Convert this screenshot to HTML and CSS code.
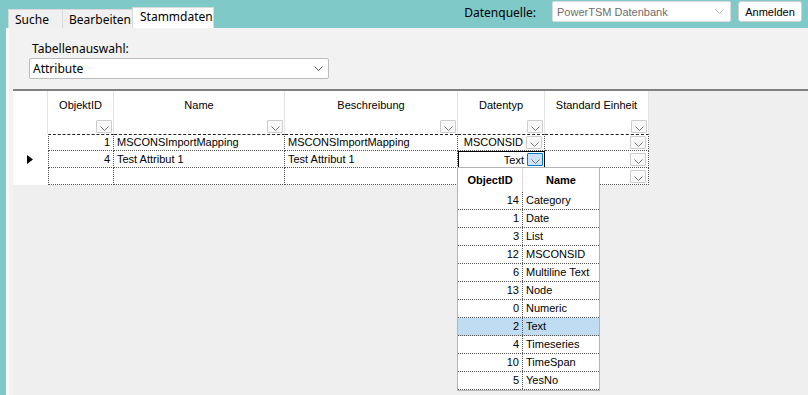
FILE: index.html
```html
<!DOCTYPE html>
<html lang="de">
<head>
    <meta charset="UTF-8">
    <title>Stammdaten</title>
    <link rel="stylesheet" href="styles.css">
</head>
<body>
    <header class="topbar">
        <nav class="tabs">
            <div class="tab tab-suche">Suche</div>
            <div class="tab tab-edit">Bearbeiten</div>
            <div class="tab active">Stammdaten</div>
        </nav>
        <div class="source">
            <span class="source-label">Datenquelle:</span>
            <div class="combo combo-source">
                <span>PowerTSM Datenbank</span>
                <svg width="9" height="5" viewBox="0 0 9 5"><polyline points="0.5,0.5 4.5,4.5 8.5,0.5" fill="none" stroke="#b5b5b5"/></svg>
            </div>
            <button class="btn">Anmelden</button>
        </div>
    </header>

    <main class="panel">
        <div class="table-select">
            <label class="select-label">Tabellenauswahl:</label>
            <div class="combo combo-table">
                <span>Attribute</span>
                <svg width="9" height="5" viewBox="0 0 9 5"><polyline points="0.5,0.5 4.5,4.5 8.5,0.5" fill="none" stroke="#555"/></svg>
            </div>
        </div>

        <div class="grid-area">
            <div class="grid">
                <!-- header -->
                <div class="hcell"></div>
                <div class="hcell"><span>ObjektID</span><i class="dd"></i></div>
                <div class="hcell"><span>Name</span><i class="dd"></i></div>
                <div class="hcell"><span>Beschreibung</span><i class="dd"></i></div>
                <div class="hcell"><span>Datentyp</span><i class="dd"></i></div>
                <div class="hcell"><span>Standard Einheit</span><i class="dd"></i></div>

                <!-- row 1 -->
                <div class="rhead first"></div>
                <div class="cell num idcol first">1</div>
                <div class="cell first">MSCONSImportMapping</div>
                <div class="cell first">MSCONSImportMapping</div>
                <div class="cell combo-cell first"><span>MSCONSID</span><i class="dd"></i></div>
                <div class="cell combo-cell first"><span></span><i class="dd"></i></div>

                <!-- row 2 -->
                <div class="rhead"><svg width="6" height="9" viewBox="0 0 6 9"><polygon points="0,0 6,4.5 0,9" fill="#000"/></svg></div>
                <div class="cell num idcol">4</div>
                <div class="cell">Test Attribut 1</div>
                <div class="cell">Test Attribut 1</div>
                <div class="cell combo-cell editing"><span>Text</span><i class="dd hot"></i></div>
                <div class="cell combo-cell"><span></span><i class="dd"></i></div>

                <!-- new row -->
                <div class="rhead"></div>
                <div class="cell num idcol"></div>
                <div class="cell"></div>
                <div class="cell"></div>
                <div class="cell combo-cell"><span></span></div>
                <div class="cell combo-cell"><span></span><i class="dd"></i></div>
            </div>

            <div class="dropdown">
                <div class="drow dhead"><span>ObjectID</span><span>Name</span></div>
                <div class="drow"><span>14</span><span>Category</span></div>
                <div class="drow"><span>1</span><span>Date</span></div>
                <div class="drow"><span>3</span><span>List</span></div>
                <div class="drow"><span>12</span><span>MSCONSID</span></div>
                <div class="drow"><span>6</span><span>Multiline Text</span></div>
                <div class="drow"><span>13</span><span>Node</span></div>
                <div class="drow"><span>0</span><span>Numeric</span></div>
                <div class="drow selected"><span>2</span><span>Text</span></div>
                <div class="drow"><span>4</span><span>Timeseries</span></div>
                <div class="drow"><span>10</span><span>TimeSpan</span></div>
                <div class="drow"><span>5</span><span>YesNo</span></div>
            </div>
        </div>
    </main>
</body>
</html>
```

FILE: styles.css
```css
        html, body {
            height: 100%;
        }

        body {
            margin: 0;
            background: #80c9c9;
            font-family: "Noto Sans", Arial, sans-serif;
            font-size: 12px;
            color: #000;
            display: flex;
            flex-direction: column;
            overflow: hidden;
        }

        .topbar {
            height: 28px;
            display: flex;
            justify-content: space-between;
            flex-shrink: 0;
        }

        .tabs {
            display: flex;
            align-items: flex-end;
            padding-left: 8px;
        }

        .tab {
            height: 18px;
            padding: 0 0 0 6px;
            line-height: 19px;
            background: #f0f0f0;
            border: 1px solid #d9d9d9;
            border-bottom: none;
            margin-right: -1px;
            box-sizing: content-box;
            white-space: nowrap;
        }

        .tab-suche {
            width: 47px;
        }

        .tab-edit {
            width: 63px;
        }

        .tab.active {
            width: 73px;
            height: 20px;
            line-height: 18px;
            background: #fff;
            padding-left: 7px;
            position: relative;
        }

        .source {
            display: flex;
            align-items: flex-start;
            padding-top: 1px;
            padding-right: 6px;
        }

        .source-label {
            margin-top: 3px;
            margin-right: 16px;
        }

        .combo {
            display: flex;
            align-items: center;
            justify-content: space-between;
            background: #fff;
            border: 1px solid #dcdcdc;
            border-radius: 2px;
            box-sizing: border-box;
        }

        .combo-source {
            width: 179px;
            height: 21px;
            padding: 0 6px 0 4px;
            color: #6d6d6d;
            font-family: "Liberation Sans", Arial, sans-serif;
            font-size: 11px;
            margin-right: 7px;
        }

        .btn {
            width: 64px;
            height: 21px;
            padding: 0;
            background: #fdfdfd;
            border: 1px solid #d0d0d0;
            border-radius: 3px;
            font-family: "Liberation Sans", Arial, sans-serif;
            font-size: 11px;
            color: #000;
        }

        .panel {
            flex: 1;
            margin-left: 6px;
            background: #f2f2f2;
            border-left: 3px solid #f8f8f8;
            display: flex;
            flex-direction: column;
        }

        .table-select {
            padding: 12px 0 0 20px;
        }

        .select-label {
            display: block;
            padding-left: 3px;
            line-height: 18px;
        }

        .combo-table {
            width: 300px;
            height: 21px;
            padding: 0 5px 0 3px;
            border-color: #bcbcbc;
        }

        .grid-area {
            flex: 1;
            margin: 10px 0 0 4px;
            background: #efefef;
            border-top: 2px solid #808080;
            position: relative;
        }

        .grid {
            display: grid;
            grid-template-columns: 35px 66px 171px 173px 87px 104px;
            width: 636px;
            font-family: "Liberation Sans", Arial, sans-serif;
            font-size: 11px;
        }

        .hcell {
            height: 43px;
            background: #fff;
            border-right: 1px solid #e4e4e4;
            box-sizing: border-box;
            display: flex;
            flex-direction: column;
            align-items: center;
            padding-top: 8px;
            white-space: nowrap;
        }

        .hcell .dd {
            align-self: flex-end;
            margin: auto 1px 1px 0;
        }

        .rhead {
            height: 17px;
            background: #fff;
            box-sizing: border-box;
            display: flex;
            align-items: center;
            padding-left: 14px;
        }

        .cell {
            height: 17px;
            box-sizing: border-box;
            background: #fff;
            border-right: 1px dotted #555;
            border-bottom: 1px dotted #555;
            padding: 0 3px;
            line-height: 16px;
            white-space: nowrap;
            overflow: hidden;
        }

        .cell.first {
            border-top: 1px dashed #222;
            line-height: 15px;
        }

        .rhead.first {
            border-top: 1px solid transparent;
        }

        .idcol {
            border-left: 1px dotted #555;
        }

        .num {
            text-align: right;
        }

        .combo-cell {
            display: flex;
            align-items: center;
            justify-content: flex-end;
            gap: 3px;
            padding: 0 2px 0 3px;
        }

        .combo-cell span {
            flex: 1;
            text-align: right;
        }

        .cell.editing {
            border: 1px solid #000;
            padding-right: 1px;
        }

        .dd {
            display: block;
            width: 16px;
            height: 13px;
            box-sizing: border-box;
            background: #f9f9f9 url("data:image/svg+xml,%3Csvg xmlns='http://www.w3.org/2000/svg' width='9' height='5'%3E%3Cpolyline points='0.5,0.5 4.5,4.5 8.5,0.5' fill='none' stroke='%23707070'/%3E%3C/svg%3E") no-repeat center 5px;
            border: 1px solid #cdcdcd;
            border-radius: 1px;
            flex-shrink: 0;
        }

        .dd.hot {
            background-color: #cce4f7;
            border-color: #0078d7;
        }

        .dropdown {
            position: absolute;
            left: 444px;
            top: 76px;
            width: 143px;
            box-sizing: border-box;
            background: #fff;
            border: 1px solid #b4b4b4;
            font-family: "Liberation Sans", Arial, sans-serif;
            font-size: 11px;
        }

        .drow {
            display: grid;
            grid-template-columns: 65px 1fr;
            height: 18px;
            box-sizing: border-box;
            border-bottom: 1px dotted #555;
            line-height: 17px;
            white-space: nowrap;
        }

        .drow span:first-child {
            text-align: right;
            padding-right: 3px;
            border-right: 1px dotted #555;
        }

        .drow span:last-child {
            padding-left: 3px;
        }

        .drow.dhead {
            height: 24px;
            line-height: 24px;
            font-weight: bold;
            border-bottom: none;
        }

        .drow.dhead span {
            text-align: center;
            padding: 0;
            border-right-style: solid;
            border-right-color: #dadada;
        }

        .drow.dhead span:last-child {
            border-right: none;
        }

        .drow.selected {
            background: #c0dcf3;
        }
```
